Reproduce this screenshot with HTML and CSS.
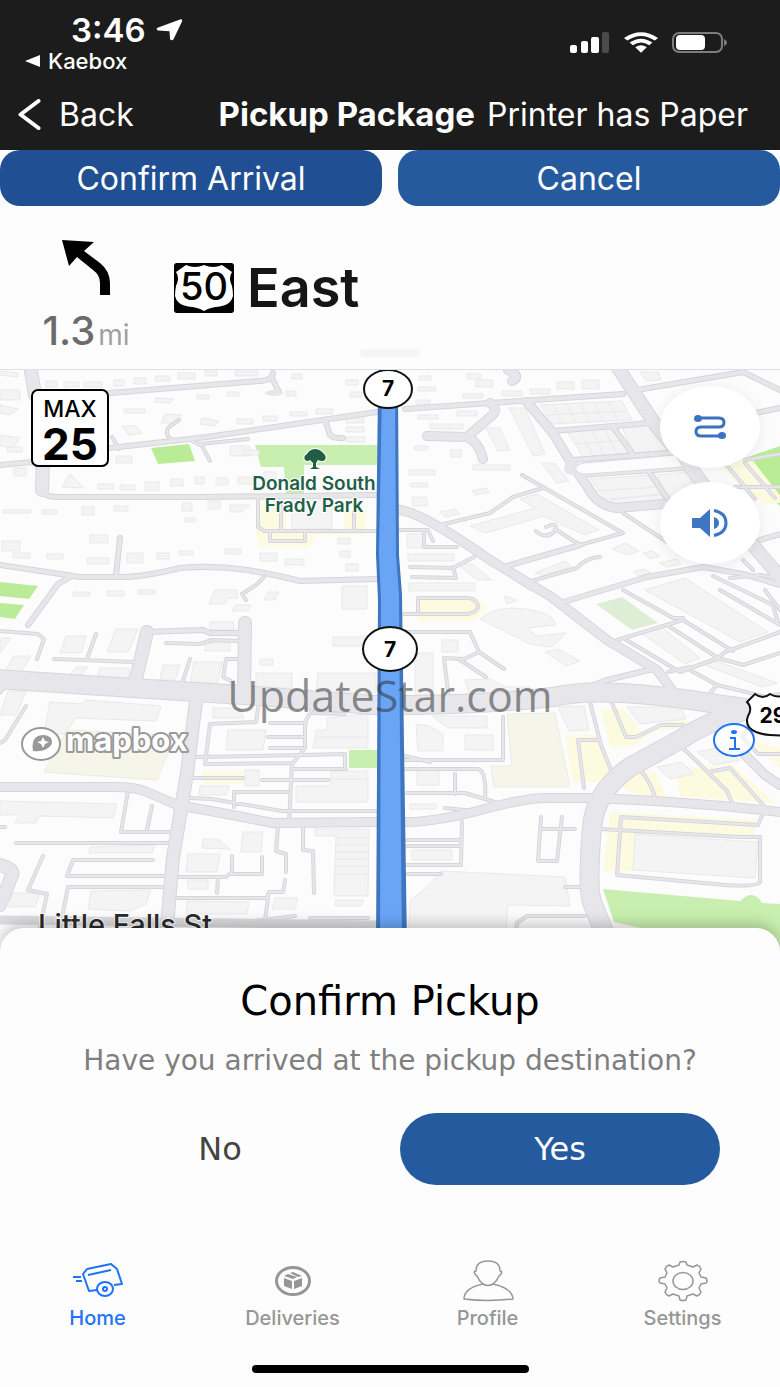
FILE: index.html
```
<!DOCTYPE html>
<html lang="en">
<head>
    <meta charset="UTF-8">
    <meta name="viewport" content="width=device-width, initial-scale=1.0">
    <title>Pickup Package</title>
    <link rel="stylesheet" href="styles.css">
</head>
<body>
    <header class="top">
        <div class="status">
            <div class="status-left">
                <div class="clock">3:46
                    <svg width="27" height="22" viewBox="0 0 27 22"><path d="M1.500 8.800 24 .4q2.800-.6 2 2L17.500 20.300q-2 2.200-3.500-.3l-.5-7.800-11.500-.6q-2.500-1.300-.5-2.800z" fill="#fff"/></svg>
                </div>
                <a class="return" href="#">
                    <svg width="16" height="12" viewBox="0 0 16 12"><path d="M0 6 15 0v12z" fill="#fff"/></svg>
                    Kaebox
                </a>
            </div>
            <div class="status-right">
                <svg width="40" height="22" viewBox="0 0 40 22">
                    <rect x="0" y="13" width="7" height="8" rx="2" fill="#fff"/>
                    <rect x="11" y="9" width="7" height="12" rx="2" fill="#fff"/>
                    <rect x="21" y="5" width="8" height="16" rx="2" fill="#fff"/>
                    <rect x="32" y="0" width="7" height="21" rx="2" fill="#4b4b4b"/>
                </svg>
                <svg width="34" height="22" viewBox="0 0 34 22" fill="#fff">
                    <path d="M0 6Q17-5.500 34 6l-3.200 2.600Q17-.8 3.200 8.600z"/>
                    <path d="M5.600 10.600Q17 2.800 28.400 10.600l-3.200 2.600Q17 7.800 8.800 13.200z"/>
                    <path d="M11.200 15.300Q17 11.200 22.800 15.300L17 20.800z"/>
                </svg>
                <svg width="56" height="22" viewBox="0 0 56 22">
                    <rect x="1" y="1" width="49" height="19" rx="6" fill="none" stroke="#7d7d7d" stroke-width="2"/>
                    <rect x="4" y="3" width="29" height="15" rx="4" fill="#fff"/>
                    <path d="M52 7q3 1.500 3 3.500T52 14z" fill="#7d7d7d"/>
                </svg>
            </div>
        </div>
        <nav class="navbar">
            <button class="back" type="button">
                <svg width="23" height="31" viewBox="0 0 23 31"><path d="M20.500 2 2.500 15.500l18 13.500" fill="none" stroke="#fff" stroke-width="4" stroke-linecap="round" stroke-linejoin="round"/></svg>
                Back
            </button>
            <h1>Pickup Package</h1>
            <span class="printer">Printer has Paper</span>
        </nav>
    </header>

    <div class="actions">
        <button type="button" class="confirm">Confirm Arrival</button>
        <button type="button">Cancel</button>
    </div>

    <section class="directions">
        <div class="maneuver">
            <div class="turn">
                <svg width="49" height="56" viewBox="0 0 49 56"><path d="M0 0 32 2 22 11 38 23Q48 31 48 43v12H38V43Q38 35 31 30L15 17 7 26z"/></svg>
                <div class="distance">1.3<span>mi</span></div>
            </div>
            <div class="road">
                <svg width="60" height="50" viewBox="0 0 60 50">
                    <rect width="60" height="50" rx="3"/>
                    <path d="M12 2q9 4 18 0 9 4 18 0l10 7q-4 6 0 14 1 5 1 10-2 9-13 10.500-10 .5-16 4.500-6-4-16-4.500Q3 42 1 33q0-5 1-10 4-8 0-14z" fill="#fff"/>
                    <text x="30" y="37" text-anchor="middle" class="shield-number">50</text>
                </svg>
                East
            </div>
        </div>
        <div class="handle"></div>
    </section>

    <main class="map">
        <svg class="map-canvas" viewBox="0 370 780 576" preserveAspectRatio="xMidYMin slice">
            <defs>
                <g id="roads-xs">
                    <path d="M112 437l7 12M173 440q-10-5-4-13l10-7M192 441l10 5 8 15M200 444l48-5M326 420"/>
                    <path d="M258 497v30l6 4h113M281 497v34M354 512v19M270 531v10h35v-10"/>
                    <path d="M0 631l38 3 6 5-7 20M96 634l-9 25M54 659l80 3M166 643l34 1 12-4 28 1M190 659l-9 28M238 659h-12l-3 18 10 5M264 577l-8 8-14 9 4 6"/>
                    <path d="M26 706L5 740l-5 3M259 703l-3 19-46 2-5 40 88-1M270 723h36M268 737h36M270 748h32M196 757l108-2M193 778h50M312 710l-7 12v26l-13 16-3 58M305 755l40-1v15M293 769h53M262 780h66M190 798l22 1 70 12h95M234 807v-15h54M345 714l-32-1"/>
                    <path d="M128 791l-7 41h50M152 806l-5 24M16 843h155M153 860H73l-6 16h98M43 856l-15 34 19 4-7 33M60 927l8-40h94M179 877h47l6-5v-16M232 874h30v-17M218 877l-1 16M177 898h90l2-6h14l2-12M278 827l-2 24 10 3v18M303 827v23l10 1 1 42M268 898l-3 22M310 930v-12h58M0 827h5M255 921l40-5"/>
                    <path d="M522 475l101 58-43 12M440 525l50-12 23-16 30-9M528 582l49-14q10-11 23-11M536 531q10 9 19 0 4-10-9-4M555 529l25 16M623 513l44 29M400 530h28l5 11M424 530v17h33M410 567l43 1 21-11M453 567l3 11-44-1M404 614h64q13-3 9-11-4-6-14-5h-45v16"/>
                    <path d="M405 632h65l9 20 25 17M479 652l-15 7-20-1 5 42M460 660l26 17M405 760h98v-43M405 769h73q9 3 7 30M455 774v20M407 793h58l36 11M445 808l28 3M462 822l-1 43h-54M407 840h53M407 846h53M407 874h34M405 756l25 6"/>
                    <path d="M541 817l-3 44h19l5-44M541 829h34M565 887h18M515 945l2-22 10-7h58M600 829l140 8h20v45q-3 5-35 3l-108-10 4-58 137 8 6-14"/>
                    <path d="M578 740h20M578 740l6 48M590 702l11 43 10 25M612 703l14 34h10l25-12h22l10 5M640 770q10 10 16 30M680 745l47 46 5 12M708 772l22-4 34 38M757 720l-15 16 16 18h22"/>
                    <path d="M617 640l66-20 50 31M623 638l57 34 38-14 7-6 55-20M667 625l51 33 25 7 37-12M623 590l50 28h10M690 670l27 15 63 15M717 685l-7 8M720 590l60 35M765 590l15 20M668 672l22-5"/>
                    <path d="M713 576l60 29 5 18M730 578l30-3 20 3M743 560l10 10M735 487h45M725 463l30 36M745 463l30 35M745 460l35-6M667 402"/>
                </g>
                <g id="roads-sm">
                    <path d="M0 465l33-3M110 448l97-11 170-25M110 393l150-12q13-1 13-8M273 380l6 12"/>
                    <path d="M0 565l80 12h43q20 0 57-9 33-3 67 2 20 3 53 11l77-2M70 577l-12 7-30 41M120 538l-4 37M42 490q3 7 15 7h143l177-2M325 420l5 15q5 4 13 3"/>
                    <path d="M147 632l56-2 7 3h30M405 409l85-6 133-9M637 390l106-18 37 18M553 431l97-8M573 460l97-7M580 475l103-7M613 427l19 26M650 473l17 25M740 416l40-8"/>
                    <path d="M503 567l77-22M560 603l87-26 56-10 40 7 37 11M500 567l30 20M760 540l20-6M580 690l27-10 46-11"/>
                </g>
                <g id="roads-md">
                    <path d="M0 787h115q20 0 32 5l30 13 50 9 46 9 104-1M405 822q30 0 72-11 50-14 73-13h37q100 3 193 14"/>
                    <path d="M527 402l26 31 20 33 14 20q10 20 30 22l46-4M490 403q10 7 0 14l-23 20-40-1M467 437q12 5 16 22M508 370q14 6 4 11M400 510q23 3 90 50l60 36 57 44 50 30 15 20"/>
                    <path d="M745 755l20 20 15 10"/>
                </g>
                <g id="roads-lg">
                    <path d="M30 365l5 30M43 460l-1 30M245 623l-1 70M147 632l-13 55M0 865q14 4 12 10L0 905M0 685l-8 8"/>
                    <path d="M613 360l24 37 20 30 33 40 33 43 34 40 23 27M197 693l-10 80-14 85-8 90"/>
                </g>
                <g id="roads-xl">
                    <path d="M-5 679l138 9 110 7 130 10h40q80-1 140-8 50-12 170 8l60 8M780 702q-60 12-97 36l-53 29q-35 25-38 60-5 60 0 75l20 50"/>
                </g>
            </defs>

            <rect x="0" y="370" width="780" height="576" fill="#fcfcfc"/>

            <g class="parks">
                <path d="M255 445h122v20h-73v32h-18l-2-30h-23zM349 750h28v18h-28zM603 889l137 12q13-13 22 2l18 1v42h-60l-106-24z"/>
                <path class="bright" d="M151 448l38-4 6 17-37 3zM0 582l38 4-9 13-29-3zM0 603l24 2-9 14-15-2zM745 458l35-12v60l-20-18z"/>
                <path class="faint" d="M596 604l26-7 36 26-26 7z"/>
            </g>
            <g class="lots">
                <path d="M262 498h24v33h58v-20h22v24h-50l-6 12h-50l-4-14zM203 771h40v13h-40zM415 597h60l12 11-15 13h-55zM720 465l30-8 35 45-20 3-25-18z"/>
                <path d="M565 735h30l18 37-10 10h-30zM601 710l22-2 20 26 25-14h18l6 8-35 2-25 17h-22zM620 787l22-18 14 4 10 24-25-2zM675 770l57-5 43 38-95-7zM610 812l145 8v15l-112-4v40h-40zM750 740l30 8v20z"/>
            </g>
            <g class="school">
                <path d="M67 730l96 5 5 18-11 27-113-8zM507 714l48-1 14 69v5h-75l-3-21h21z"/>
            </g>
            <g class="buildings">
                <path d="M2 541h18v10H2zM0 371l18 2v4l-18-2zM46 381h11v6H46zM64 382h15v5H64zM84 382h18v5H84zM114 380h10v6h-10zM134 378h12v6h-12zM155 376h15v5h-15zM178 373h17v6h-17zM205 371h12v5h-12zM235 371h23v5h-23zM292 374h10v5h-10zM346 380h12v5h-12zM350 392h12v5h-12zM156 398l17 1-3 4-15-1zM197 395h12v4h-12zM227 392h12v4h-12zM286 391h10v5h-10zM124 409h21v4h-21zM165 414l16 1-6 8h-14zM122 426h13l7 7-13 2zM202 418l17 3-5 5-14-2zM237 419h16v5h-16zM263 416h14v5h-14zM290 412h17v4h-17zM316 409h17v5h-17zM346 418h18v5h-18zM346 427h18v5h-18zM347 437h18v5h-18zM230 446h20v10h-20zM243 450h16v5h-16zM116 456h16v7h-16zM0 390h20v10H0zM0 405l18 4-8 6-10-2zM0 435l20 3-7 10-13-2zM7 447h15v5H7zM14 468h12v8H14zM70 474l14 14-22-1zM98 484h16v5H98zM120 485h15v5h-15zM145 482h14v9h-14zM171 479h12v7h-12zM195 477h9v7h-9zM216 478h12v7h-12zM238 477h15v7h-15zM264 472h12v7h-12z"/>
                <path d="M3 510h28v3H3zM42 510h15v4H42zM82 507h12v8H82zM114 506h14v5h-14zM182 503h10v8h-10zM208 501h12v8h-12zM230 505h20l-8 7h-12zM185 518h11v4h-11zM90 535h18v8H90zM13 553h17v5H13zM47 554h16v5H47zM87 558h22v6H87zM127 553h16v10h-16zM157 553h12v6h-12zM179 551h14v4h-14zM225 549h16v5h-16zM260 553h17v8h-17zM285 559h19v6h-19zM338 538h12v6h-12zM340 551h10v6h-10zM346 564h12v7h-12zM292 500h40v29h-40z"/>
                <path d="M73 592h17v4H73zM107 591h17v5h-17zM138 590h17v4h-17zM215 590h22v8h-8l-5 6h-15zM236 605h15l-3 6h-16zM268 592h11l-4 8h-11zM342 586h25v23h-25zM66 636h20l-5 17H60zM116 629h22l-10 23h-21zM14 656h17l-10 16H4zM0 638h11L0 653zM76 667h12l-6 8H70zM100 668h29v10H97zM163 665h17l-5 15h-15zM194 662h28l-5 23h-27zM210 622h24v8h-24zM206 643h24v8h-25zM260 659h13v6h-13zM256 673h36v15h-36zM318 673h58v20h-60zM333 637h40v9h-40zM8 691h18l-10 24H0z"/>
                <path d="M50 702l32 2 4-4 75 6-5 15-80-3-12 16-20-1zM213 708h26l5 10h-31zM228 730h38l-3 20h-37zM245 770h14v16h-14zM200 786h29l-3 9h-27zM327 718l41-4v34h-55l3-18h11zM331 771h37v31h-72v-16h34zM0 801l117 3-4 14-74-2-3 7H15l4-8H0zM90 847l65-2-3 8H89zM12 893h28l-5 14H9zM91 891l60-1-5 14-16 7-42-2zM188 854h32l-3 18h-31zM203 839h15l12 10-28-1zM243 832h20l-2 20h-20zM188 880h20v9h-20zM187 901l62 1-2 12h-61zM275 898h23l-3 11h-23zM315 829h54l-1 67h-34l2-60h-21zM336 900h28l-4 6h-25z"/>
                <path d="M336 838h33M336 845h33M336 852h33M336 859h33M336 866h33M335 874h33M316 737h53M331 779h37"/>
                <path d="M419 376h12v4h-12zM418 387h18v4h-18zM416 400h14v4h-14zM467 374h14v5h-14zM476 380h17v7h-17zM463 394h20v4h-20zM502 391h20v5h-20zM530 389h20v5h-20zM557 382h17v7h-17zM582 380h17v9h-17zM640 372h18l3 8-15 1zM418 415h20v4h-20zM430 424h33v5h-33zM457 411h20v5h-20zM486 428h14l10 22-12 1zM509 408h16l20 46-12 2zM414 446h14v4h-14zM451 450h10v7h-10zM409 470h26v5h-26zM411 483h17v4h-17zM412 497h14l2 9h-15zM440 512l15-3 5 5-15 3zM472 491l14-3 4 4-14 3zM473 465h37v5h-37zM541 463h13l15 18-12 2zM540 405l82-4 10 19-79 4zM567 431l50-4 12 26-46 4zM622 427l34-3 15 26-38 3zM590 479l60-4 10 20-55 4zM610 500l50-6 5 7-50 5zM657 475l30-3 10 22-30 4z"/>
                <path d="M546 415l80-4M553 405l10 18M567 404l9 18M580 403l10 19M594 402l9 19M608 401l10 20M575 444l50-4M580 430l13 26M592 429l12 26M604 428l13 26M596 491l60-4"/>
                <path d="M470 526l65-18-15-9 17-5 62 36-15 5-40-19-58 17zM407 534h18v14h-18zM408 554h46v7h-46zM457 564h15l20 16h-15zM535 573l30-12 7 6-30 8zM612 549l13-6 14 8-12 4zM643 553l9-2 8 5-10 3zM659 563l18-4 4 5-14 3zM633 572l12-3 6 4-12 3zM409 583h66v8h-66zM504 596l13 4-10 4zM480 619q15-14 45-10 30 4 30 16l-27 3 8 8 30-3-14 14-22-3zM545 652l13-3 22 12-14 5z"/>
                <path d="M645 590l40-12 83 54-28 10zM640 632l20-6 40 32-15 6zM705 665l12-4 60 22-15 4zM415 653h18v47h-18zM442 640h16v12h-16zM465 680l25-1 15 8h25l-5 7-55 2zM432 716h55v12h-39zM416 724l13 2 14 8v17h-25zM465 735h28v15h-28zM417 770h22v15h-22zM410 804h26v5h-26zM412 850h40v10h-40zM558 707l26-1 5 24-20 1zM627 707h54l5 12-46 5zM697 752l25-5 18 13-25 5zM657 767l25-5 12 12-24 5zM635 834l123 8-3 36-122-8zM441 871l124 6 5 29-62-1-3 41h-97l2-45 20-17z"/>
            </g>

            <g class="roads">
                <g class="case">
                    <use href="#roads-xs" class="xs"/><use href="#roads-sm" class="sm"/><use href="#roads-md" class="md"/><use href="#roads-lg" class="lg"/><use href="#roads-xl" class="xl"/>
                </g>
                <g class="fill">
                    <use href="#roads-xs" class="xs"/><use href="#roads-sm" class="sm"/><use href="#roads-md" class="md"/><use href="#roads-lg" class="lg"/><use href="#roads-xl" class="xl"/>
                </g>
                <ellipse cx="274" cy="393" rx="9" ry="3" fill="#e7e7eb"/>
                <ellipse cx="572" cy="468" rx="8" ry="7" fill="#e7e7eb"/>
                <path d="M584 463q-10 2-8 7 3 5 12 4l95-7-8-12z" fill="#fcfcfc" stroke="#d9d9df"/>
                <path d="M0 920l165 2 212 3" fill="none" stroke="#dcdce0" stroke-width="9"/>
            </g>

            <!-- park marker -->
            <path class="tree" d="M305 460q-2-4 2-6 2-4 7-5 6 0 9 4 4 3 2 7-3 2-7 0l-2 3v4l4 2h-10l3-2v-4l-3-3q-3 2-5 0z"/>
            <text class="park-label" x="314" y="490">Donald South</text>
            <text class="park-label" x="314" y="512">Frady Park</text>
            <text class="street-label" x="38" y="935">Little Falls St</text>

            <!-- route line -->
            <path d="M378 390h20l1 165 3 40 2 150 3 201h-31l2-346-2-45z" fill="#3f76c2"/>
            <path d="M382 390h13l1 165 3 40 1 150 2 201h-22l1-346-2-45z" fill="#6aa5f5"/>

            <g class="route-shield">
                <ellipse cx="388" cy="389" rx="24" ry="19"/>
                <text x="388" y="396">7</text>
                <ellipse cx="390" cy="649" rx="27" ry="22"/>
                <text x="390" y="657">7</text>
                <path d="M755 694q8 6 15 0 8 5 16 0v42q-10-1-16-1-6 0-14-3-12-5-8-16 5-8-1-14z"/>
                <text x="773" y="723">29</text>
            </g>

            <!-- map provider logo -->
            <g class="mapbox">
                <ellipse cx="41" cy="744" rx="19" ry="16" fill="#fff" stroke="#999" stroke-width="2"/>
                <path d="M33 751q-2-12 5-15 8-3 13 2 3 6-3 10-6 4-15 3z" fill="#989898"/>
                <path d="M43 737l2 4 4 1-4 2-2 4-2-4-4-2 4-1z" fill="#fff"/>
                <text x="66" y="751">mapbox</text>
            </g>
        </svg>

        <div class="speed-limit">MAX<strong>25</strong></div>

        <div class="map-buttons">
            <button type="button" aria-label="Route overview">
                <svg width="34" height="26" viewBox="0 0 34 26"><path d="M4 4h22q5 0 5 4.500T26 13H8q-5 0-5 4.500T8 22h20" fill="none" stroke="#3973c0" stroke-width="3"/><ellipse cx="5" cy="4.500" rx="4" ry="3.500" fill="#3973c0"/><ellipse cx="29" cy="21.500" rx="4" ry="3.500" fill="#3973c0"/></svg>
            </button>
            <button type="button" aria-label="Mute">
                <svg width="38" height="30" viewBox="0 0 38 30"><path d="M1 10h8l10-9v28l-10-9H1zM23 9q5 1.500 5 6t-5 6z" fill="#3f76c4"/><path d="M23 2.500Q35 5 35 15T23 27.500" fill="none" stroke="#3f76c4" stroke-width="3"/></svg>
            </button>
        </div>

        <button type="button" class="info" aria-label="Map info">
            <svg width="44" height="36" viewBox="0 0 44 36"><ellipse cx="22" cy="18" rx="20" ry="16" fill="#fff" fill-opacity=".6" stroke="#1f74f5" stroke-width="2"/><ellipse cx="22" cy="10" rx="3" ry="2" fill="#1f74f5"/><path d="M18 16h5v11M17 27h11" fill="none" stroke="#1f74f5" stroke-width="2"/></svg>
        </button>

        <div class="watermark">UpdateStar.com</div>
    </main>

    <section class="sheet">
        <h2>Confirm Pickup</h2>
        <p>Have you arrived at the pickup destination?</p>
        <div class="answers">
            <button type="button">No</button>
            <button type="button" class="yes">Yes</button>
        </div>
    </section>

    <nav class="tabs">
        <a href="#" class="active">
            <svg width="52" height="46" viewBox="0 0 52 46" fill="none" stroke="currentColor" stroke-width="2" stroke-linejoin="round">
                <path d="M25 31l-8 1-6-17 4-5 24-5 6 5 5 15-8 1"/><path d="M16 16l23-5M1 18h8M4 22h6"/><ellipse cx="33" cy="30" rx="8" ry="7"/><ellipse cx="33" cy="30" rx="2" ry="2"/>
            </svg>
            Home
        </a>
        <a href="#">
            <svg width="52" height="46" viewBox="0 0 52 46">
                <ellipse cx="26" cy="22" rx="16.500" ry="13.500" fill="none" stroke="currentColor" stroke-width="3"/>
                <path d="M17 19l8 3v8l-8-3zM35 19l-8 3v8l8-3zM17 17l4-2 9 3-4 2zM23 14l3-1 9 4-4 1z" fill="currentColor"/>
            </svg>
            Deliveries
        </a>
        <a href="#">
            <svg width="52" height="46" viewBox="0 0 52 46" fill="none" stroke="currentColor" stroke-width="1.500" stroke-linejoin="round">
                <path d="M14 12q0-10 12-10t12 10q2 0 1.500 2-.5 2-2.500 3-2 5-6 8-5 3-10 0-4-3-6-8-2-1-2.500-3-.5-2 1.500-2z"/>
                <path d="M21 25Q2 29 2 40q24 3 49 0Q50 29 31 25"/>
            </svg>
            Profile
        </a>
        <a href="#">
            <svg width="52" height="46" viewBox="0 0 52 46" fill="none" stroke="currentColor" stroke-width="1.500" stroke-linejoin="round">
                <path d="M22 6l1-3q3-1 6 0l1 3 6 2 4-2q3 1 4 4l-2 4 2 4 5 1q2 3 0 5l-5 1-2 4 2 4q-1 3-4 4l-4-2-6 2-1 4q-3 1-6 0l-1-4-6-2-4 2q-3-1-4-4l2-4-2-4-5-1q-2-2 0-5l5-1 2-4-2-4q1-3 4-4l4 2z"/>
                <ellipse cx="26" cy="22" rx="10" ry="8.500"/>
            </svg>
            Settings
        </a>
    </nav>
    <div class="home-indicator"></div>
</body>
</html>
```
FILE: styles.css
```
* {
    box-sizing: border-box;
}

body {
    margin: 0;
    min-height: 100vh;
    display: flex;
    flex-direction: column;
    font-family: Inter, "Liberation Sans", sans-serif;
    background-color: #fdfdfd;
    color: #000000;
}

svg {
    display: block;
    flex: none;
}

button {
    font-family: inherit;
    border: none;
    padding: 0;
    background: none;
    cursor: pointer;
}

a {
    color: inherit;
    text-decoration: none;
}

.top {
    background-color: #1c1c1c;
    color: #ffffff;
}

.status {
    display: flex;
    justify-content: space-between;
    padding: 12px 52px 0 25px;
    height: 78px;
}

.clock {
    display: flex;
    align-items: center;
    gap: 10px;
    padding-left: 46px;
    font-size: 33px;
    font-weight: 600;
    line-height: 36px;
}

.return {
    display: flex;
    align-items: center;
    gap: 7px;
    font-size: 22px;
    font-weight: 500;
    line-height: 26px;
}

.status-right {
    display: flex;
    gap: 14px;
    padding-top: 20px;
}

.navbar {
    display: flex;
    align-items: center;
    padding: 0 32px 0 18px;
    height: 72px;
    font-size: 32px;
    white-space: nowrap;
}

.back {
    display: flex;
    align-items: center;
    gap: 18px;
    font-size: 32px;
    color: #ffffff;
}

.navbar h1 {
    margin: 0 12px 0 auto;
    font-size: 33px;
    font-weight: 700;
}

.actions {
    display: grid;
    grid-template-columns: 1fr 1fr;
    gap: 16px;
}

.actions button {
    height: 56px;
    border-radius: 20px;
    background-color: #265a9f;
    color: #ffffff;
    font-size: 32px;
}

.actions .confirm {
    background-color: #204f93;
}

.directions {
    padding: 34px 0 12px;
    border-bottom: 1px solid #dbe0ea;
}

.maneuver {
    display: flex;
    align-items: flex-start;
}

.turn {
    display: flex;
    flex-direction: column;
    align-items: center;
    width: 172px;
}

.distance {
    padding-top: 13px;
    font-size: 40px;
    font-weight: 500;
    line-height: 44px;
    color: #6b6b6b;
}

.distance span {
    padding-left: 3px;
    font-size: 28px;
    font-weight: 400;
    color: #a0a0a0;
}

.road {
    display: flex;
    align-items: center;
    gap: 13px;
    padding: 20px 0 0 2px;
    font-size: 54px;
    font-weight: 600;
    line-height: 56px;
    color: #161616;
}

.shield-number {
    font-size: 38px;
    font-weight: 500;
}

.handle {
    width: 60px;
    height: 8px;
    margin: -8px auto 0;
    border-radius: 4px;
    background-color: #f5f5f5;
}

/* map */
.map {
    position: relative;
    flex: 1;
    min-height: 400px;
    margin-bottom: -18px;
    overflow: hidden;
}

.map-canvas {
    position: absolute;
    width: 100%;
    height: 100%;
}

.parks {
    fill: #c8efaf;
}

.parks .bright {
    fill: #baec98;
}

.parks .faint {
    fill: #deedd6;
}

.lots {
    fill: #fcfbe0;
}

.school {
    fill: #f5f5ea;
    stroke: #ebebe2;
}

.buildings {
    fill: #f4f4f4;
    stroke: #e9e9ea;
}

.roads use {
    fill: none;
    stroke-linejoin: round;
    stroke-linecap: round;
}

.case {
    stroke: #d5d5dc;
}

.fill {
    stroke: #e7e7eb;
}

.case .xs { stroke-width: 4px; }
.case .sm { stroke-width: 6px; }
.case .md { stroke-width: 10px; }
.case .lg { stroke-width: 14px; }
.case .xl { stroke-width: 20px; }
.fill .xs { stroke-width: 2px; }
.fill .sm { stroke-width: 4px; }
.fill .md { stroke-width: 8px; }
.fill .lg { stroke-width: 12px; }
.fill .xl { stroke-width: 18px; }

.tree {
    fill: #215d45;
    stroke: #ffffff;
    stroke-width: 2px;
    paint-order: stroke;
}

.park-label {
    font-size: 19px;
    font-weight: 600;
    text-anchor: middle;
    fill: #1f6047;
    stroke: #ffffff;
    stroke-width: 2px;
    paint-order: stroke;
}

.street-label {
    font-size: 29px;
    font-weight: 500;
    fill: #2b2b2b;
    stroke: #ffffff;
    stroke-width: 2px;
    paint-order: stroke;
}

.route-shield ellipse,
.route-shield path {
    fill: #ffffff;
    stroke: #111111;
    stroke-width: 2px;
}

.route-shield text {
    font-size: 21px;
    font-weight: 700;
    text-anchor: middle;
}

.mapbox text {
    font-size: 31px;
    font-weight: 700;
    fill: #ffffff;
    stroke: #999999;
    stroke-width: 4px;
    stroke-linejoin: round;
    paint-order: stroke;
}

.speed-limit {
    position: absolute;
    top: 19px;
    left: 31px;
    width: 78px;
    padding-top: 4px;
    border: 2px solid #000000;
    border-radius: 7px;
    background-color: #ffffff;
    text-align: center;
    font-size: 23px;
    font-weight: 500;
    line-height: 28px;
}

.speed-limit strong {
    display: block;
    font-size: 44px;
    line-height: 42px;
}

.map-buttons {
    position: absolute;
    top: 16px;
    right: 20px;
    display: grid;
    gap: 14px;
}

.map-buttons button {
    display: grid;
    place-items: center;
    width: 100px;
    height: 82px;
    border-radius: 50%;
    background-color: #ffffff;
    box-shadow: 0 2px 14px rgba(0, 0, 0, 0.08);
}

.info {
    position: absolute;
    top: 352px;
    right: 24px;
}

.watermark {
    position: absolute;
    top: 296px;
    left: 0;
    width: 100%;
    text-align: center;
    font-family: "Open Sans", sans-serif;
    font-size: 43px;
    line-height: 60px;
    color: rgba(50, 50, 50, 0.55);
}

/* confirm pickup */
.sheet {
    position: relative;
    padding: 51px 60px 0;
    border-radius: 24px 24px 0 0;
    background-color: #fdfdfd;
    box-shadow: 0 -4px 14px rgba(0, 0, 0, 0.22);
    clip-path: inset(-20px 0 0 0);
    text-align: center;
    font-family: "DejaVu Sans", sans-serif;
}

.sheet h2 {
    margin: 0 0 20px;
    font-size: 40px;
    font-weight: 400;
    line-height: 44px;
}

.sheet p {
    margin: 0 0 34px;
    font-size: 28px;
    line-height: 36px;
    color: #7f7f7f;
}

.answers {
    display: grid;
    grid-template-columns: 1fr 1fr;
    gap: 20px;
}

.answers button {
    height: 72px;
    border-radius: 36px;
    font-size: 32px;
    color: #444444;
}

.answers .yes {
    background-color: #265a9f;
    color: #ffffff;
}

.tabs {
    display: grid;
    grid-template-columns: repeat(4, 1fr);
    padding: 74px 0 34px;
}

.tabs a {
    display: flex;
    flex-direction: column;
    align-items: center;
    font-size: 20px;
    font-weight: 500;
    line-height: 26px;
    color: #969696;
}

.tabs .active {
    color: #1f74f5;
}

.home-indicator {
    width: 277px;
    max-width: 50%;
    height: 8px;
    margin: 0 auto 14px;
    border-radius: 4px;
    background-color: #000000;
}
```
